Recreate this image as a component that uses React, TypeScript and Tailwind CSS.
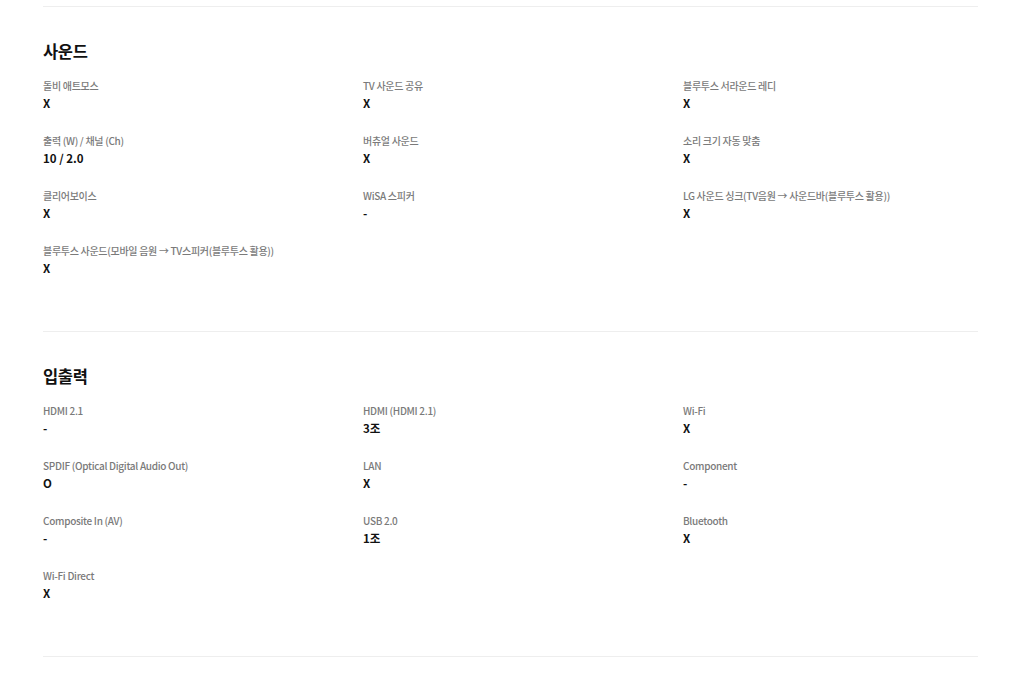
const sections = [
  {
    title: "사운드",
    items: [
      ["돌비 애트모스", "X"],
      ["TV 사운드 공유", "X"],
      ["블루투스 서라운드 레디", "X"],
      ["출력 (W) / 채널 (Ch)", "10 / 2.0"],
      ["버츄얼 사운드", "X"],
      ["소리 크기 자동 맞춤", "X"],
      ["클리어보이스", "X"],
      ["WiSA 스피커", "-"],
      ["LG 사운드 싱크(TV음원 → 사운드바(블루투스 활용))", "X"],
      ["블루투스 사운드(모바일 음원 → TV스피커(블루투스 활용))", "X"],
    ],
  },
  {
    title: "입출력",
    items: [
      ["HDMI 2.1", "-"],
      ["HDMI (HDMI 2.1)", "3조"],
      ["Wi-Fi", "X"],
      ["SPDIF (Optical Digital Audio Out)", "O"],
      ["LAN", "X"],
      ["Component", "-"],
      ["Composite In (AV)", "-"],
      ["USB 2.0", "1조"],
      ["Bluetooth", "X"],
      ["Wi-Fi Direct", "X"],
    ],
  },
];

export default function App() {
  return (
    <div
      className="min-h-screen bg-white pt-[6px]"
      style={{ fontFamily: '"Noto Sans CJK KR", "Noto Sans", sans-serif' }}
    >
      <div className="ml-[43px] w-[935px]">
        {sections.map((s) => (
          <section key={s.title} className="border-t border-[#eeeeee] pt-[31px] pb-[54px]">
            <h2 className="text-[16.5px] leading-[26px] font-bold tracking-[-0.02em] text-[#111]">{s.title}</h2>
            <div className="mt-[14px] grid grid-cols-[300px_300px_300px] gap-x-5 gap-y-[21px]">
              {s.items.map(([label, value]) => (
                <div key={label}>
                  <div className="text-[10px] leading-4 font-medium tracking-[-0.03em] text-[#7a7a7a]">{label}</div>
                  <div className="text-[11.5px] leading-[18px] font-bold text-[#111]">{value}</div>
                </div>
              ))}
            </div>
          </section>
        ))}
        <div className="border-t border-[#eeeeee]" />
      </div>
    </div>
  );
}
